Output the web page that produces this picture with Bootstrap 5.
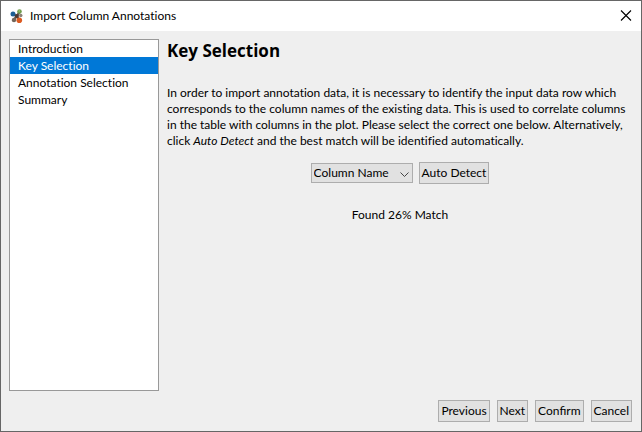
<!DOCTYPE html>
<html lang="en">
<head>
<meta charset="utf-8">
<meta name="viewport" content="width=device-width, initial-scale=1">
<title>Import Column Annotations</title>
<link href="https://cdn.jsdelivr.net/npm/bootstrap@5.3.0/dist/css/bootstrap.min.css" rel="stylesheet">
<style>
body { font-family: Lato, "Open Sans", sans-serif; font-size: 12px; line-height: 16px; font-variant-ligatures: none; color: #000; background: #efefef; }
.dialog { border: 1px solid #666; }
.titlebar { height: 30px; padding: 0 9px; gap: 7px; background: #fff; }
.close-btn { width: 12px; height: 12px; line-height: 0; }
.dialog-body { padding: 8px; gap: 8px; }
.steps { width: 150px; background: #fff; border: 1px solid #999; }
.steps .list-group-item { padding: 0 8px; line-height: 17px; color: #000; background: #fff; }
.steps .list-group-item.active { color: #fff; background: #0078d7; margin: 0; }
.page-title { font-family: "Open Sans", "Noto Sans", sans-serif; font-size: 17px; line-height: 24px; font-weight: 700; margin-bottom: 22px; }
.intro { margin-bottom: 13px; }
.win-btn { --bs-btn-padding-x: 2px; --bs-btn-padding-y: 2px; --bs-btn-font-size: 12px; --bs-btn-line-height: 16px; --bs-btn-border-radius: 0; --bs-btn-bg: #e1e1e1; --bs-btn-color: #000; --bs-btn-border-color: #adadad; --bs-btn-hover-bg: #e5f1fb; --bs-btn-hover-color: #000; --bs-btn-hover-border-color: #0078d7; }
.picker { width: 102px; height: 20px; padding: 0 18px 0 2px; font-size: 12px; line-height: 16px; color: #000; border: 1px solid #adadad; border-radius: 0; background-color: #e1e1e1; background-image: none; }
.picker-wrap svg { right: 4px; top: 9px; pointer-events: none; }
.controls { gap: 6px; margin-bottom: 23px; }
.actions { gap: 7px; padding: 1px 9px 9px; }
</style>
<script src="https://cdn.jsdelivr.net/npm/bootstrap@5.3.0/dist/js/bootstrap.bundle.min.js"></script>
</head>
<body>
<div class="dialog d-flex flex-column min-vh-100">
  <header class="titlebar d-flex align-items-center">
    <svg width="13" height="15" viewBox="0 0 13 15" aria-hidden="true">
      <path d="M2 5 7 7 9.500 3M7 7 2.500 12M7 7 9 11" stroke="#6a5a50" stroke-width="2.400" fill="none"/>
      <circle cx="3" cy="5" r="2.500" fill="#1c5f94"/>
      <circle cx="9.500" cy="2.500" r="2.300" fill="#6f9d4c"/>
      <circle cx="6.800" cy="7" r="2" fill="#4d3a33"/>
      <circle cx="10.800" cy="6.500" r="1.700" fill="#8b8278"/>
      <circle cx="4" cy="11" r="2.200" fill="#72665a"/>
      <circle cx="9.300" cy="11.200" r="2.800" fill="#dc5a20"/>
      <circle cx="9.300" cy="2" r=".8" fill="#a3c77e"/>
    </svg>
    <span class="flex-grow-1">Import Column Annotations</span>
    <button type="button" class="close-btn btn p-0 border-0 rounded-0" aria-label="Close">
      <svg width="12" height="12" viewBox="0 0 12 12" aria-hidden="true"><path d="M1 .5 11 10.500M11 .5 1 10.500" stroke="#000" stroke-width="1.1"/></svg>
    </button>
  </header>
  <div class="dialog-body d-flex flex-grow-1">
    <nav class="steps list-group list-group-flush rounded-0 flex-shrink-0" aria-label="Steps">
      <a href="#" class="list-group-item border-0">Introduction</a>
      <a href="#" class="list-group-item border-0 active" aria-current="step">Key Selection</a>
      <a href="#" class="list-group-item border-0">Annotation Selection</a>
      <a href="#" class="list-group-item border-0">Summary</a>
    </nav>
    <main class="flex-grow-1">
      <h1 class="page-title">Key Selection</h1>
      <p class="intro">In order to import annotation data, it is necessary to identify the input data row which corresponds to the column names of the existing data. This is used to correlate columns in the table with columns in the plot. Please select the correct one below. Alternatively, click <em>Auto Detect</em> and the best match will be identified automatically.</p>
      <div class="controls d-flex justify-content-center align-items-center">
        <div class="picker-wrap position-relative d-flex">
          <select class="picker form-select" aria-label="Key"><option>Column Name</option></select>
          <svg class="position-absolute" width="9" height="6" viewBox="0 0 9 6" aria-hidden="true"><path d="M.5 .5 4.5 4.5 8.5 .5" stroke="#444" fill="none"/></svg>
        </div>
        <button type="button" class="btn win-btn">Auto Detect</button>
      </div>
      <p class="text-center mb-0">Found 26% Match</p>
    </main>
  </div>
  <footer class="actions d-flex justify-content-end">
    <button type="button" class="btn win-btn">Previous</button>
    <button type="button" class="btn win-btn">Next</button>
    <button type="button" class="btn win-btn">Confirm</button>
    <button type="button" class="btn win-btn">Cancel</button>
  </footer>
</div>
</body>
</html>
